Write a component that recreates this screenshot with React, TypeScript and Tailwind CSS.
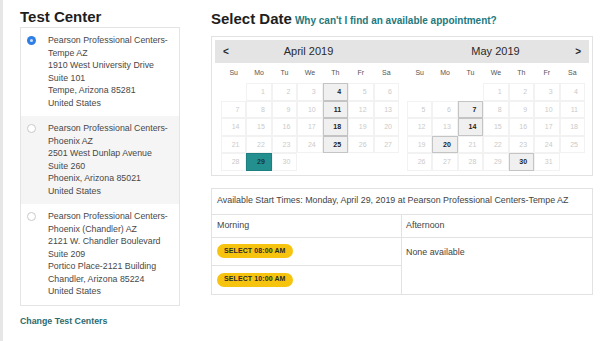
import React from 'react';

const FONT = { fontFamily: '"Liberation Sans", Arial, sans-serif' };

const centers = [
  {
    lines: ['Pearson Professional Centers-', 'Tempe AZ', '1910 West University Drive', 'Suite 101', 'Tempe, Arizona 85281', 'United States'],
    selected: true,
  },
  {
    lines: ['Pearson Professional Centers-', 'Phoenix AZ', '2501 West Dunlap Avenue', 'Suite 260', 'Phoenix, Arizona 85021', 'United States'],
    selected: false,
  },
  {
    lines: [
      'Pearson Professional Centers-',
      'Phoenix (Chandler) AZ',
      '2121 W. Chandler Boulevard',
      'Suite 209',
      'Portico Place-2121 Building',
      'Chandler, Arizona 85224',
      'United States',
    ],
    selected: false,
  },
];

const dayNames = ['Su', 'Mo', 'Tu', 'We', 'Th', 'Fr', 'Sa'];

interface MonthProps {
  offset: number;
  days: number;
  enabled: number[];
  selected?: number;
}

const MonthGrid = ({ offset, days, enabled, selected }: MonthProps) => {
  const cells: (number | null)[] = [];
  for (let i = 0; i < offset; i++) cells.push(null);
  for (let d = 1; d <= days; d++) cells.push(d);
  while (cells.length % 7 !== 0) cells.push(null);

  return (
    <div className="w-[178px]">
      <div className="grid grid-cols-7 h-[20px] items-center">
        {dayNames.map((n) => (
          <div key={n} className="text-center text-[7px] text-[#555]">
            {n}
          </div>
        ))}
      </div>
      <div className="grid grid-cols-7">
        {cells.map((d, i) => {
          if (d === null) return <div key={i} className="h-[17.5px]" />;
          if (d === selected) {
            return (
              <div
                key={i}
                className="h-[17.5px] border border-[#1d7f80] bg-[#23908f] text-right pr-[6px] text-[7px] font-bold leading-[15.5px] text-[#173a3a]"
              >
                {d}
              </div>
            );
          }
          if (enabled.includes(d)) {
            return (
              <div
                key={i}
                className="h-[17.5px] border border-[#c4c4c4] bg-[#f0f0f0] text-right pr-[6px] text-[7px] font-bold leading-[15.5px] text-[#222]"
              >
                {d}
              </div>
            );
          }
          return (
            <div
              key={i}
              className="h-[17.5px] border border-[#f2f2f2] text-right pr-[6px] text-[7px] leading-[15.5px] text-[#cacaca]"
            >
              {d}
            </div>
          );
        })}
      </div>
    </div>
  );
};

const Radio = ({ checked }: { checked: boolean }) =>
  checked ? (
    <span className="mt-[2px] flex h-[9px] w-[9px] shrink-0 items-center justify-center rounded-full bg-[#2f7fe6]">
      <span className="h-[3px] w-[3px] rounded-full bg-[#cfe2fb]" />
    </span>
  ) : (
    <span className="mt-[2px] h-[9px] w-[9px] shrink-0 rounded-full border border-[#c9c9c9] bg-white" />
  );

const SelectButton = ({ label }: { label: string }) => (
  <span className="inline-flex h-[14px] items-center rounded-full bg-[#f6c40f] px-[7px] text-[7px] font-bold tracking-[0.1px] text-[#2a2a2a]">
    {label}
  </span>
);

export default function App() {
  return (
    <div className="flex h-[341px] w-[606px] items-start bg-white border-l-[3px] border-[#e6e6e6]" style={FONT}>
      {/* left column */}
      <div className="ml-[17px] w-[160px] pt-[9px]">
        <h1 className="h-[15px] text-[15px] font-bold leading-[15px] text-[#1e1e1e]">Test Center</h1>
        <div className="mt-[3px] border border-[#e4e4e4]">
          {centers.map((c, idx) => (
            <div
              key={idx}
              className={`flex gap-[12px] pl-[6px] pt-[6px] pb-[7px] ${idx === 1 ? 'bg-[#f5f5f5]' : 'bg-white'}`}
            >
              <Radio checked={c.selected} />
              <div className="text-[8.8px] leading-[12.5px] text-[#484848]">
                {c.lines.map((l) => (
                  <div key={l}>{l}</div>
                ))}
              </div>
            </div>
          ))}
        </div>
        <div className="mt-[9px] text-[8.8px] font-bold text-[#2c6b70]">Change Test Centers</div>
      </div>

      {/* right column */}
      <div className="ml-[31px] w-[383px] pt-[11px]">
        <div className="flex h-[16px] items-baseline gap-[3px]">
          <h2 className="text-[15px] font-bold leading-[16px] text-[#1e1e1e]">Select Date</h2>
          <span className="text-[10px] font-bold text-[#23797d]">Why can't I find an available appointment?</span>
        </div>

        <div className="mt-[9px] w-[382px] border border-[#e2e2e2] p-[3px] pb-[1px]">
          <div className="flex h-[23px] items-center bg-[#e4e4e4] text-[#2a2a2a]">
            <div className="flex w-1/2 items-center">
              <span className="w-[20px] pl-[8px] text-[10px] font-bold">&lt;</span>
              <span className="flex-1 pr-[20px] text-center text-[11px]">April 2019</span>
            </div>
            <div className="flex w-1/2 items-center">
              <span className="flex-1 pl-[20px] text-center text-[11px]">May 2019</span>
              <span className="w-[20px] pr-[8px] text-right text-[10px] font-bold">&gt;</span>
            </div>
          </div>
          <div className="flex pb-[3px]">
            <div className="flex w-1/2 pl-[6px]">
              <MonthGrid offset={1} days={30} enabled={[4, 11, 18, 25]} selected={29} />
            </div>
            <div className="flex w-1/2 pl-[5px]">
              <MonthGrid offset={3} days={31} enabled={[7, 14, 20, 30]} />
            </div>
          </div>
        </div>

        <div className="mt-[12px] w-[382px] border border-[#e2e2e2] text-[8.9px] text-[#444]">
          <div className="flex h-[26px] items-center border-b border-[#e2e2e2] pl-[5px]">
            Available Start Times: Monday, April 29, 2019 at Pearson Professional Centers-Tempe AZ
          </div>
          <div className="grid grid-cols-2">
            <div className="border-r border-[#e2e2e2]">
              <div className="flex h-[23px] items-center border-b border-[#e2e2e2] pl-[5px]">Morning</div>
              <div className="flex h-[28px] items-center border-b border-[#e2e2e2] pl-[5px]">
                <SelectButton label="SELECT 08:00 AM" />
              </div>
              <div className="flex h-[28px] items-center pl-[5px]">
                <SelectButton label="SELECT 10:00 AM" />
              </div>
            </div>
            <div>
              <div className="flex h-[23px] items-center border-b border-[#e2e2e2] pl-[4px]">Afternoon</div>
              <div className="pl-[4px] pt-[8px]">None available</div>
            </div>
          </div>
        </div>
      </div>
    </div>
  );
}
